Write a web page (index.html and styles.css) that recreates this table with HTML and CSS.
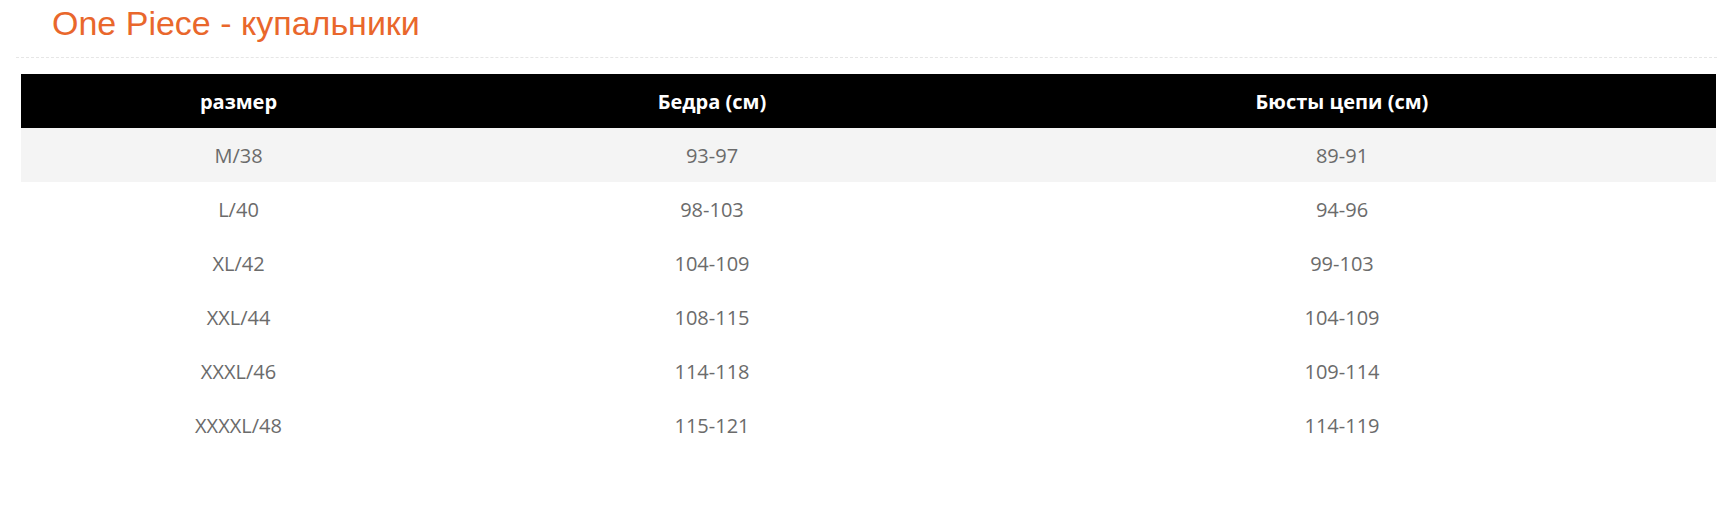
FILE: index.html
```html
<!DOCTYPE html>
<html lang="ru">
<head>
<meta charset="utf-8">
<title>One Piece - купальники</title>
<link rel="stylesheet" href="styles.css">
</head>
<body>
<div class="wrap">
  <div class="title-bar">
    <h1 class="title">One Piece - купальники</h1>
  </div>
  <table class="size-table">
    <colgroup>
      <col class="c1">
      <col class="c2">
      <col class="c3">
    </colgroup>
    <thead>
      <tr><th>размер</th><th>Бедра (см)</th><th>Бюсты цепи (см)</th></tr>
    </thead>
    <tbody>
      <tr class="shade"><td>M/38</td><td>93-97</td><td>89-91</td></tr>
      <tr><td>L/40</td><td>98-103</td><td>94-96</td></tr>
      <tr><td>XL/42</td><td>104-109</td><td>99-103</td></tr>
      <tr><td>XXL/44</td><td>108-115</td><td>104-109</td></tr>
      <tr><td>XXXL/46</td><td>114-118</td><td>109-114</td></tr>
      <tr><td>XXXXL/48</td><td>115-121</td><td>114-119</td></tr>
    </tbody>
  </table>
</div>
</body>
</html>
```
FILE: styles.css
```css
html, body {
  margin: 0;
  padding: 0;
  background: #ffffff;
}

.wrap {
  padding: 0 3px 0 16px;
}

.title-bar {
  padding: 4px 0 14px 36px;
  border-bottom: 1px dashed #e6e6e6;
}

.title {
  margin: 0;
  font-family: "Liberation Sans", Arial, sans-serif;
  font-size: 34px;
  font-weight: normal;
  line-height: 39px;
  color: #e9672c;
}

.size-table {
  margin: 16px 0 0 5px;
  width: 1695px;
  border-collapse: collapse;
  table-layout: fixed;
  font-family: "Open Sans", "Noto Sans", sans-serif;
}

.c1 { width: 435px; }
.c2 { width: 512px; }
.c3 { width: 748px; }

.size-table th {
  background: #000000;
  color: #ffffff;
  font-size: 20px;
  font-weight: bold;
  height: 54px;
  padding: 0;
  text-align: center;
  vertical-align: middle;
}

.size-table td {
  height: 54px;
  padding: 0;
  font-size: 20px;
  color: #6b6b6b;
  text-align: center;
  vertical-align: middle;
}

.size-table tr.shade td {
  background: #f4f4f4;
}
```
